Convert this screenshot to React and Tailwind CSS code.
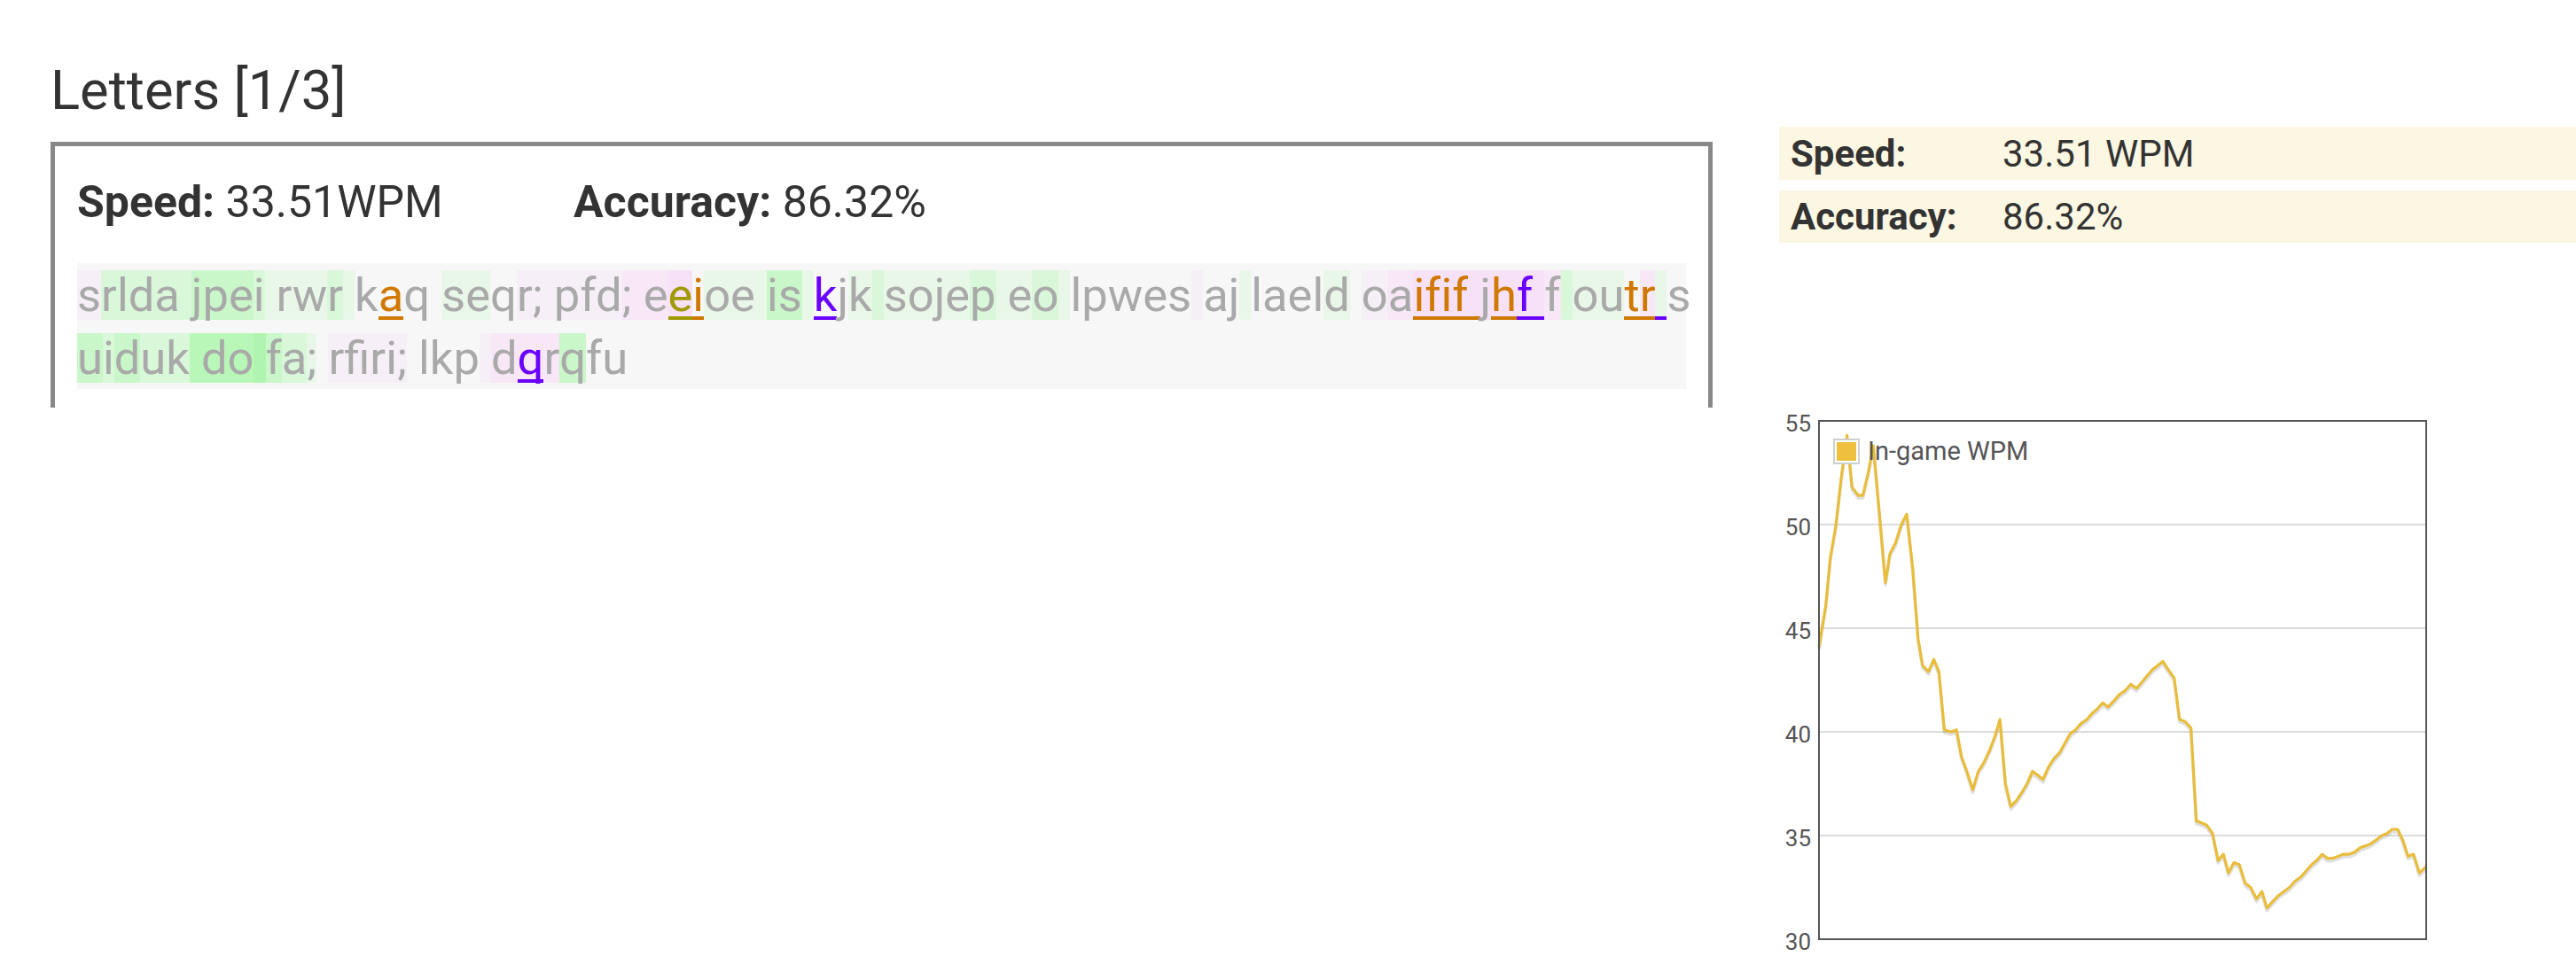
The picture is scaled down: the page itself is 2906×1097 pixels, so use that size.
import React from "react";

const G1 = "#e9f7e9", G2 = "#d9f7d9", G3 = "#c9f7c9", G4 = "#b9f7b9", G5 = "#aff5af";
const P1 = "#f7eff7", P2 = "#f7e7f7", P3 = "#f6e1f6";
const OR = "#d07800", OL = "#a09a00", PU = "#6a00ff";

// [text, bg, fg, underline]
const line1 = [
  ["s", P1], ["rlda ", G2], ["jpe", G3], ["i", G2], [" rw", G1], ["r", G2], [" ", G1],
  ["k"], ["a", null, OR, true], ["q"], [" "], ["se", G1], ["q"], ["r; pfd", P1], ["; e", P2],
  ["e", P3, OL, true], ["i", null, OR, true], ["oe ", G1], ["is", G3], [" ", G1],
  ["k", null, PU, true], ["j"], ["k", G1], [" ", G2], ["soje", G1], ["p", G2], [" e", G1], ["o", G2], [" ", G1],
  ["lpwes"], [" ", P1], ["aj"], [" ", G1], ["lael"], ["d", G1], [" "], ["o", P1], ["a", P2],
  ["i", P3, OR, true], ["f", P3, OR, true], ["i", P3, OR, true], ["f", P3, OR, true], [" ", P3, OR, true],
  ["j", P3], ["h", P3, OR, true], ["f", P3, PU, true], [" ", P3, PU, true], ["f", P2], [" ", G2], ["ou", G1],
  ["t", null, OR, true], ["r", P2, OR, true], [" ", G1, PU, true], ["s"],
];
const line2 = [
  ["u", G3], ["i", G2], ["d", G3], ["uk", G2], [" do", G4], [" ", G5], ["f", G3], ["a", G2], [";", G1], [" "],
  ["rfiri;", P1], [" lkp"], [" ", P1], ["d", P2], ["q", P2, PU, true], ["r", P2], ["q", G3], ["fu"],
];

function Line({ segs }) {
  return (
    <div className="whitespace-pre h-[56px] leading-[56px]">
      {segs.map(([t, bg, fg, ul], i) => (
        <span
          key={i}
          className={
            "inline-block align-top h-[56px] leading-[56px] box-border " +
            (ul ? "border-b-4 border-solid" : "")
          }
          style={{
            backgroundColor: bg || "transparent",
            color: fg || undefined,
            borderBottomColor: ul ? fg : undefined,
          }}
        >
          {t}
        </span>
      ))}
    </div>
  );
}

// chart data: [perceivedX, value]
const raw = [
  [203, 44.1], [218, 46.1], [228, 48.4], [240, 49.9], [252, 52.2], [265, 54.3], [276, 51.8], [290, 51.4],
  [300, 51.4], [312, 52.5], [323, 53.8], [335, 50.9], [350, 47.2], [360, 48.6], [372, 49.1], [385, 50.0],
  [397, 50.5], [410, 47.9], [422, 44.5], [432, 43.2], [445, 42.9], [457, 43.5], [468, 42.9], [480, 40.1],
  [495, 40.0], [507, 40.1], [518, 38.8], [530, 38.1], [543, 37.2], [555, 38.1], [567, 38.5], [580, 39.1],
  [592, 39.8], [603, 40.6], [615, 37.5], [627, 36.4], [640, 36.7], [652, 37.1], [663, 37.5], [675, 38.1],
  [687, 37.9], [698, 37.7], [710, 38.3], [722, 38.7], [735, 39.0], [745, 39.4], [758, 39.9], [770, 40.1],
  [782, 40.4], [795, 40.6], [807, 40.9], [818, 41.1], [830, 41.4], [842, 41.2], [855, 41.5], [867, 41.8],
  [880, 42.0], [892, 42.3], [905, 42.1], [917, 42.4], [928, 42.7], [940, 43.0], [952, 43.2], [963, 43.4],
  [975, 43.0], [988, 42.6], [1000, 40.6], [1012, 40.5], [1025, 40.2], [1037, 35.7], [1050, 35.6],
  [1060, 35.5], [1073, 35.1], [1085, 33.8], [1097, 34.1], [1108, 33.2], [1120, 33.7], [1132, 33.6],
  [1145, 32.7], [1157, 32.5], [1170, 31.95], [1182, 32.3], [1193, 31.5], [1205, 31.8], [1218, 32.1],
  [1230, 32.3], [1243, 32.5], [1255, 32.8], [1268, 33.0], [1280, 33.3], [1292, 33.6], [1303, 33.8],
  [1315, 34.1], [1327, 33.9], [1338, 33.9], [1350, 34.0], [1362, 34.1], [1375, 34.1], [1387, 34.2],
  [1398, 34.4], [1410, 34.5], [1422, 34.6], [1435, 34.8], [1447, 35.0], [1458, 35.1], [1470, 35.3],
  [1482, 35.3], [1493, 34.8], [1505, 34.0], [1517, 34.1], [1530, 33.2], [1545, 33.5],
];

const PL = 45, PR = 730, PT = 15, PB = 600;
const yOf = (v) => PT + ((55 - v) / 25) * (PB - PT);
const xOf = (px) => PL + ((px - 203) / (1545 - 203)) * (PR - PL);
const pts = raw.map(([x, v]) => `${xOf(x).toFixed(1)},${yOf(v).toFixed(1)}`).join(" ");
const shadowPts = raw.map(([x, v]) => `${xOf(x).toFixed(1)},${(yOf(v) + 3).toFixed(1)}`).join(" ");

function Chart() {
  const ticks = [55, 50, 45, 40, 35, 30];
  return (
    <svg width="740" height="632" className="block" style={{ fontFamily: "Roboto, sans-serif" }}>
      {ticks.slice(1, 5).map((t) => (
        <line key={t} x1={PL} x2={PR} y1={yOf(t)} y2={yOf(t)} stroke="#dcdcdc" strokeWidth="2" />
      ))}
      {ticks.map((t) => (
        <text key={t} x={PL - 9} y={yOf(t) + 5} textAnchor="end" dominantBaseline="middle" fontSize="26" fill="#555">
          {t}
        </text>
      ))}
      <polyline points={shadowPts} fill="none" stroke="rgba(0,0,0,0.12)" strokeWidth="3.5" strokeLinejoin="round" />
      <polyline points={pts} fill="none" stroke="#e9bd3c" strokeWidth="3.2" strokeLinejoin="round" />
      <rect x={PL} y={PT} width={PR - PL} height={PB - PT} fill="none" stroke="#555" strokeWidth="2" />
      <rect x="62" y="36" width="28" height="27" fill="#fff" stroke="#cfcfcf" strokeWidth="2" />
      <rect x="65" y="39" width="22" height="21" fill="#eec03e" />
      <text x="100" y="59" fontSize="29" fill="#555">In-game WPM</text>
    </svg>
  );
}

export default function App() {
  return (
    <div className="flex w-[2906px] min-h-[1097px] bg-white font-['Roboto','Noto_Sans',sans-serif] text-[#333]">
      <div className="ml-[57px] w-[1875px] shrink-0 pt-[66px]">
        <h2 className="text-[61.5px] leading-[72px] font-normal">Letters [1/3]</h2>
        <div className="mt-[22px] h-[300px] border-t-[5px] border-x-[5px] border-solid border-[#888] px-[25px] pt-[33px]">
          <div className="flex text-[50px] leading-[60px]">
            <div className="w-[560px]">
              <span className="font-bold">Speed:</span> 33.51WPM
            </div>
            <div>
              <span className="font-bold">Accuracy:</span> 86.32%
            </div>
          </div>
          <div className="mt-[39px] bg-[#f7f7f7] pt-2 pb-[7px] flex flex-col gap-[15px] text-[52.5px] text-[#a9a9a9]">
            <Line segs={line1} />
            <Line segs={line2} />
          </div>
        </div>
      </div>
      <div className="ml-[75px] flex-1 pt-[143px]">
        <div className="h-[60px] bg-[#fcf7e3] flex items-center pl-[13px] text-[42px]">
          <span className="w-[239px] font-bold">Speed:</span>
          <span>33.51 WPM</span>
        </div>
        <div className="mt-[12px] h-[59px] bg-[#fcf7e3] flex items-center pl-[13px] text-[42px]">
          <span className="w-[239px] font-bold">Accuracy:</span>
          <span>86.32%</span>
        </div>
        <div className="mt-[186px]">
          <Chart />
        </div>
      </div>
    </div>
  );
}
